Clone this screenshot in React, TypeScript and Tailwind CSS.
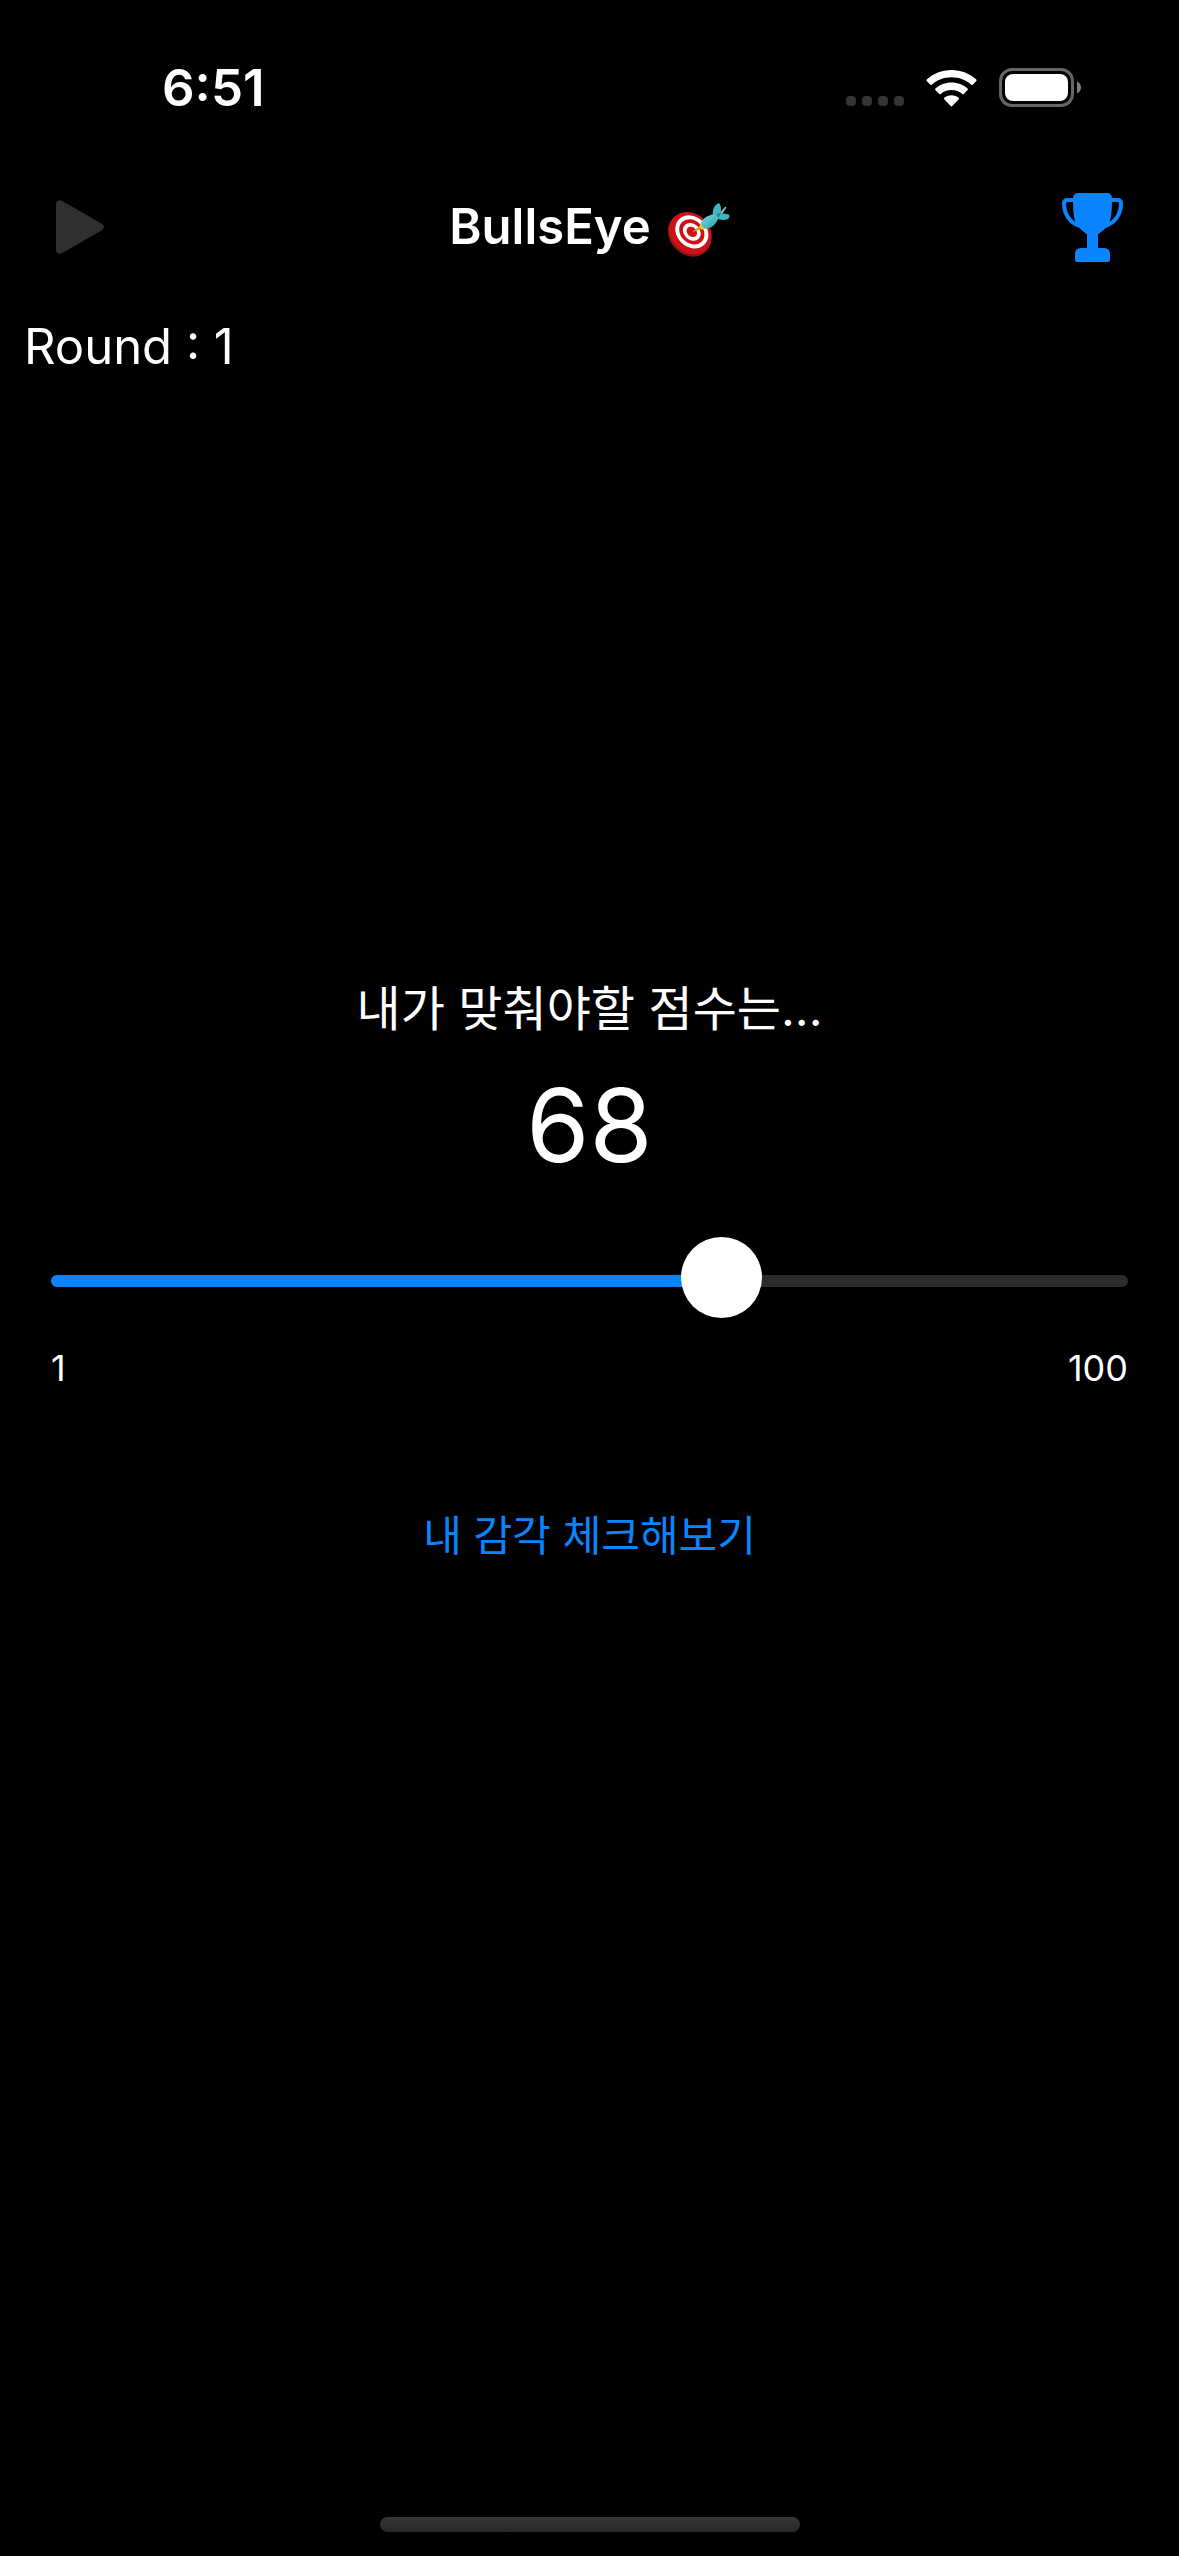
import { useState } from "react";
import type { CSSProperties } from "react";

const MIN = 1;
const MAX = 100;

function SignalDots() {
  return (
    <div className="flex gap-1.5 pt-[26px]" aria-hidden="true">
      {[0, 1, 2, 3].map((i) => (
        <span key={i} className="size-2.5 rounded-[4px] bg-[#353535]" />
      ))}
    </div>
  );
}

function WifiIcon() {
  return (
    <svg width="51" height="38" viewBox="0 0 51 38" fill="#fff" role="img" aria-label="Wi-Fi">
      <path d="M25.5 1C16 1 7 4.700 .7 10.600Q0 11.300 .7 12L4.300 15.700Q5 16.400 5.700 15.700C11 11 18 8.300 25.500 8.300S40 11 45.300 15.700Q46 16.400 46.700 15.700L50.300 12Q51 11.300 50.300 10.600C44 4.700 35 1 25.500 1Z" />
      <path d="M25.500 13.600C19.300 13.600 13.700 15.900 9.400 19.600Q8.700 20.300 9.400 21L13.300 24.900Q14 25.500 14.700 24.900C17.600 22.500 21.300 21 25.500 21S33.400 22.500 36.300 24.900Q37 25.500 37.700 24.900L41.600 21Q42.300 20.300 41.600 19.600C37.300 15.900 31.700 13.600 25.500 13.600Z" />
      <path d="M25.500 26.300C22.700 26.300 20.200 27.200 18.200 28.800Q17.500 29.500 18.200 30.200L24.700 37Q25.500 37.800 26.300 37L32.800 30.200Q33.500 29.500 32.800 28.800C30.800 27.200 28.300 26.300 25.500 26.300Z" />
    </svg>
  );
}

function BatteryIcon() {
  return (
    <svg width="82" height="39" viewBox="0 0 82 39" role="img" aria-label="Battery">
      <rect x="1.500" y="1.500" width="72" height="36" rx="11.500" fill="none" stroke="#666" strokeWidth="3" />
      <rect x="6" y="6" width="63" height="27" rx="8" fill="#fff" />
      <path d="M78 13.500C80.400 14.500 82 16.700 82 19.500S80.400 24.500 78 25.500Z" fill="#808080" />
    </svg>
  );
}

function PlayIcon() {
  return (
    <svg width="48" height="54" viewBox="0 0 48 54" fill="#2f2f2f" aria-hidden="true">
      <path d="M0 4.300C0 .6 3.200-.900 6.400 .900L45.700 23.800C48.700 25.600 48.700 28.400 45.700 30.200L6.400 53.100C3.200 54.900 0 53.400 0 49.700Z" />
    </svg>
  );
}

function TrophyIcon() {
  return (
    <svg width="61" height="69" viewBox="0 0 61 69" aria-hidden="true">
      <path
        d="M12 7H5.500Q2 7 2 10.500C2 21 8 30 18 33M49 7H55.500Q59 7 59 10.500C59 21 53 30 43 33"
        fill="none"
        stroke="#0a84ff"
        strokeWidth="4"
      />
      <path
        d="M16.500 0H44.500Q50 0 50 5.500C50 20 49 27 46.500 31C44 35.500 40 38 36 41.500V55H42Q48 55 48 61V67Q48 69 46 69H15Q13 69 13 67V61Q13 55 19 55H25V41.500C21 38 17 35.500 14.500 31C12 27 11 20 11 5.500Q11 0 16.500 0Z"
        fill="#0a84ff"
      />
    </svg>
  );
}

function DartboardIcon() {
  return (
    <svg width="63" height="54" viewBox="0 0 63 54" role="img" aria-label="Dartboard" className="mt-1.5">
      <defs>
        <linearGradient id="dart-body" x1="0" y1="0" x2="1" y2="1">
          <stop offset="0" stopColor="#7fe0e6" />
          <stop offset="1" stopColor="#2497a5" />
        </linearGradient>
      </defs>
      <g transform="rotate(45 22 31)">
        <ellipse cx="23" cy="31.500" rx="23.500" ry="19.500" fill="#8a1015" />
        <ellipse cx="22.500" cy="29.500" rx="23" ry="19.500" fill="#cb1218" />
        <ellipse cx="22.500" cy="27.500" rx="18" ry="15" fill="#fff" />
        <ellipse cx="22.500" cy="27.500" rx="13.800" ry="11.300" fill="#cb1218" />
        <ellipse cx="22.500" cy="27.500" rx="9.800" ry="8" fill="#fff" />
        <ellipse cx="22.500" cy="27.500" rx="5.800" ry="4.600" fill="#cb1218" />
      </g>
      <path d="M25 29.500L34 21.500L36.500 25Z" fill="#d9a514" />
      <path d="M32.500 19.500L40 25.500L34 26.500Z" fill="#f0cf16" />
      <path d="M53 9.500L58.500 3.500L59.500 4.500L55 11Z" fill="#9fb9bd" />
      <path d="M46 12C45 6 48 1.500 52 0C54 2 54.500 6 53.500 10L62 11.500C63 13 62.500 15 61 16C57 17.500 53 17 50 15.500Z" fill="#3fb7c2" />
      <path d="M34 19C38 13 44 11.500 49 11L53 9L54 12L51.500 15C49 21 45 25.500 39 25.500C36 25 34 22.500 34 19Z" fill="url(#dart-body)" />
      <path d="M49 11L54 9.500L51.500 15Z" fill="#1f8995" />
    </svg>
  );
}

export default function App() {
  const [value, setValue] = useState(63.6);
  const progress = ((value - MIN) / (MAX - MIN)) * 100;
  const sliderStyle = { "--progress": `${progress}%` } as CSSProperties;

  return (
    <div className="flex min-h-screen flex-col bg-black font-['Inter','Noto_Sans_CJK_KR',sans-serif] text-white">
      <div className="flex h-[177px] items-start justify-between pt-[58px] pr-[98px] pl-[162px]">
        <span className="text-[51px] leading-[60px] font-semibold">6:51</span>
        <div className="flex items-center gap-[22px] pt-2.5">
          <SignalDots />
          <WifiIcon />
          <BatteryIcon />
        </div>
      </div>

      <header className="grid h-[100px] grid-cols-[1fr_auto_1fr] items-center px-14">
        <button type="button" disabled aria-label="Play" className="justify-self-start">
          <PlayIcon />
        </button>
        <h1 className="flex items-center gap-4 text-[49px] leading-[60px] font-semibold">
          BullsEye
          <DartboardIcon />
        </h1>
        <button type="button" aria-label="High scores" className="justify-self-end">
          <TrophyIcon />
        </button>
      </header>

      <main className="flex flex-1 flex-col items-stretch">
        <p className="mt-10 px-6 text-[49px] leading-[60px]">Round : 1</p>

        <div className="mt-[602px] text-center">
          <p className="text-[48px] leading-[60px]">내가 맞춰야할 점수는...</p>
          <output htmlFor="guess" className="mt-[26px] block text-[102px] leading-[120px]">
            68
          </output>
        </div>

        <div className="mt-9 px-[51px]">
          <input
            id="guess"
            type="range"
            aria-label="Guess"
            min={MIN}
            max={MAX}
            step={0.1}
            value={value}
            onChange={(e) => setValue(Number(e.target.value))}
            style={sliderStyle}
            className="block h-[120px] w-full cursor-pointer appearance-none bg-transparent [&::-webkit-slider-runnable-track]:h-3 [&::-webkit-slider-runnable-track]:rounded-full [&::-webkit-slider-runnable-track]:bg-[linear-gradient(to_right,#0a84ff_var(--progress),#2c2c2e_var(--progress))] [&::-webkit-slider-thumb]:mt-[-38px] [&::-webkit-slider-thumb]:size-[81px] [&::-webkit-slider-thumb]:appearance-none [&::-webkit-slider-thumb]:rounded-full [&::-webkit-slider-thumb]:bg-white"
          />
          <div className="flex justify-between text-[36px] leading-[54px]">
            <span>1</span>
            <span>100</span>
          </div>
        </div>

        <button type="button" className="mt-[111px] self-center text-[42px] leading-[60px] text-[#0a84ff]">
          내 감각 체크해보기
        </button>
      </main>

      <div className="mb-6 h-[15px] w-[420px] self-center rounded-full bg-linear-to-b from-[#353535] to-[#282828]" />
    </div>
  );
}
